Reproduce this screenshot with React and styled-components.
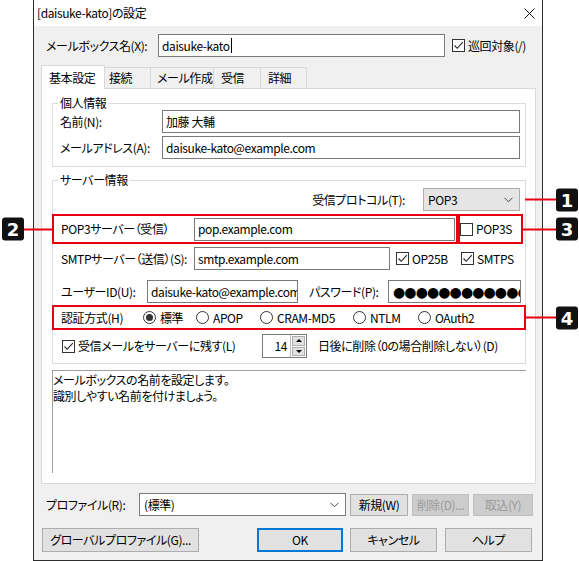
import React from 'react';
import styled, { createGlobalStyle } from 'styled-components';

const GlobalStyle = createGlobalStyle`
  html, body { margin: 0; padding: 0; background: #fff; }
  body {
    font-family: "Noto Sans CJK JP", sans-serif;
    font-size: 12px;
    line-height: 16px;
    letter-spacing: -0.4px;
    color: #000;
    font-feature-settings: "palt";
  }
  * { box-sizing: border-box; }
`;

const RED = '#e60012';

const Page = styled.div`
  width: 579px;
  height: 561px;
  padding-left: 33px;
  display: flex;
`;

const Window = styled.div`
  width: 510px;
  height: 561px;
  border: 1px solid #2d2d2d;
  border-top: none;
  display: flex;
  flex-direction: column;
`;

const TitleBar = styled.div`
  height: 26px;
  flex-shrink: 0;
  background: #fff;
  display: flex;
  align-items: center;
  justify-content: space-between;
  padding: 0 7px 0 3px;
`;

const Body = styled.div`
  flex: 1;
  background: #f0f0f0;
  padding-top: 8px;
  display: flex;
  flex-direction: column;
`;

const Row = styled.div`
  display: flex;
  align-items: center;
  height: ${p => p.$h || 23}px;
  margin-top: ${p => p.$mt || 0}px;
  padding-left: ${p => p.$pl || 0}px;
  padding-right: ${p => p.$pr || 0}px;
  justify-content: ${p => (p.$end ? 'flex-end' : 'flex-start')};
  position: relative;
  flex-shrink: 0;
`;

const Label = styled.span`
  width: ${p => (p.$w ? `${p.$w}px` : 'auto')};
  margin-left: ${p => p.$ml || 0}px;
  margin-right: ${p => p.$mr || 0}px;
  flex-shrink: 0;
  white-space: nowrap;
`;

const TextBox = styled.div`
  width: ${p => p.$w}px;
  height: ${p => p.$h || 23}px;
  margin-left: ${p => p.$ml || 0}px;
  border: 1px solid #7a7a7a;
  background: #fff;
  padding: 0 3px;
  display: flex;
  align-items: center;
  overflow: hidden;
  white-space: nowrap;
  flex-shrink: 0;
`;

const Caret = styled.span`
  width: 1px;
  height: 15px;
  background: #000;
  margin-left: 1px;
`;

const Dots = styled.span`
  font-family: "DejaVu Sans", sans-serif;
  font-size: 14px;
  letter-spacing: -0.9px;
  margin-left: 1px;
`;

const CheckWrap = styled.span`
  display: inline-flex;
  align-items: center;
  gap: 3px;
  width: ${p => (p.$w ? `${p.$w}px` : 'auto')};
  margin-left: ${p => p.$ml || 0}px;
  white-space: nowrap;
  flex-shrink: 0;
`;

const Box = styled.span`
  width: 13px;
  height: 13px;
  border: 1px solid #333;
  background: #fff;
  display: inline-flex;
  align-items: center;
  justify-content: center;
  flex-shrink: 0;
`;

const Check = ({ checked, children, w, ml }) => (
  <CheckWrap $w={w} $ml={ml}>
    <Box>
      {checked && (
        <svg width="11" height="11" viewBox="0 0 11 11">
          <path d="M1.5 5.5 L4.2 8.3 L9.8 2.2" fill="none" stroke="#222" strokeWidth="1.1" />
        </svg>
      )}
    </Box>
    <span>{children}</span>
  </CheckWrap>
);

const RadioItem = styled.span`
  display: inline-flex;
  align-items: center;
  gap: 4px;
  width: ${p => (p.$w ? `${p.$w}px` : 'auto')};
  flex-shrink: 0;
  white-space: nowrap;
`;

const RadioCircle = styled.span`
  width: 13px;
  height: 13px;
  border: 1px solid #333;
  border-radius: 50%;
  background: #fff;
  display: inline-flex;
  align-items: center;
  justify-content: center;
  flex-shrink: 0;
  &::after {
    content: '';
    width: 7px;
    height: 7px;
    border-radius: 50%;
    background: #333;
    display: ${p => (p.$on ? 'block' : 'none')};
  }
`;

const Radio = ({ on, w, children }) => (
  <RadioItem $w={w}>
    <RadioCircle $on={on} />
    <span>{children}</span>
  </RadioItem>
);

const TabStrip = styled.div`
  display: flex;
  align-items: flex-end;
  height: 23px;
  margin-top: 8px;
  padding-left: 7px;
  position: relative;
  z-index: 1;
  flex-shrink: 0;
`;

const Tab = styled.div`
  width: ${p => p.$w}px;
  height: ${p => (p.$active ? 24 : 21)}px;
  margin-bottom: ${p => (p.$active ? -1 : 0)}px;
  margin-left: ${p => (p.$first ? 0 : -1)}px;
  background: ${p => (p.$active ? '#fff' : '#f0f0f0')};
  border: 1px solid #d9d9d9;
  border-bottom: none;
  padding-left: ${p => p.$pl}px;
  display: flex;
  align-items: center;
  white-space: nowrap;
  position: relative;
  z-index: ${p => (p.$active ? 2 : 1)};
`;

const Panel = styled.div`
  margin: 0 6px 0 7px;
  height: 396px;
  flex-shrink: 0;
  background: #fff;
  border: 1px solid #d9d9d9;
  padding: 0 9px 0 10px;
  display: flex;
  flex-direction: column;
`;

const Group = styled.div`
  border: 1px solid #dcdcdc;
  margin-top: ${p => p.$mt}px;
  padding-bottom: ${p => p.$pb}px;
  display: flex;
  flex-direction: column;
`;

const GroupTitle = styled.div`
  align-self: flex-start;
  margin: -8px 0 0 5px;
  padding: 0 2px;
  height: 14px;
  line-height: 14px;
  background: #fff;
  white-space: nowrap;
`;

const RedBox = styled.div`
  border: 2px solid ${RED};
  height: ${p => p.$h}px;
  width: ${p => (p.$w ? `${p.$w}px` : 'auto')};
  flex: ${p => (p.$w ? '0 0 auto' : '1')};
  padding-left: ${p => p.$pl || 0}px;
  display: flex;
  align-items: center;
  position: relative;
`;

const RedRow = styled.div`
  display: flex;
  margin: ${p => p.$mt || 0}px -1px 0;
`;

const Callout = styled.div`
  position: absolute;
  top: 50%;
  transform: translateY(-50%);
  display: flex;
  align-items: center;
  ${p => (p.$left ? 'right: 100%; flex-direction: row-reverse;' : 'left: 100%;')}
`;

const Leader = styled.span`
  width: ${p => p.$len}px;
  height: 2px;
  background: ${RED};
`;

const Badge = styled.span`
  width: 22px;
  height: 23px;
  background: #111;
  color: #fff;
  border-radius: 3px;
  font-family: "DejaVu Sans", sans-serif;
  font-weight: bold;
  font-size: 18px;
  line-height: 23px;
  letter-spacing: 0;
  text-align: center;
  font-feature-settings: normal;
`;

const Select = styled.div`
  width: ${p => p.$w}px;
  height: 23px;
  border: 1px solid ${p => (p.$flat ? '#7a7a7a' : '#adadad')};
  background: ${p => (p.$flat ? '#fff' : '#e5e5e5')};
  display: flex;
  align-items: center;
  justify-content: space-between;
  padding: 0 6px 0 4px;
  flex-shrink: 0;
`;

const Chevron = () => (
  <svg width="9" height="6" viewBox="0 0 9 6">
    <path d="M0.5 0.8 L4.5 4.8 L8.5 0.8" fill="none" stroke="#444" strokeWidth="1" />
  </svg>
);

const SpinBox = styled.div`
  display: flex;
  width: 45px;
  height: 24px;
  border: 1px solid #7a7a7a;
  background: #fff;
  flex-shrink: 0;
`;

const SpinValue = styled.div`
  flex: 1;
  display: flex;
  align-items: center;
  justify-content: flex-end;
  padding-right: 3px;
  border-right: 1px solid #bcbcbc;
`;

const SpinButtons = styled.div`
  width: 15px;
  display: flex;
  flex-direction: column;
  padding: 1px;
  gap: 1px;
`;

const SpinButton = styled.div`
  flex: 1;
  background: #e1e1e1;
  border: 1px solid #adadad;
  display: flex;
  align-items: center;
  justify-content: center;
  &::after {
    content: '';
    border-left: 3px solid transparent;
    border-right: 3px solid transparent;
    ${p => (p.$down ? 'border-top: 3px solid #000;' : 'border-bottom: 3px solid #000;')}
  }
`;

const Description = styled.div`
  margin-top: 6px;
  height: 103px;
  border-top: 1px solid #a0a0a0;
  border-left: 1px solid #a0a0a0;
  padding-top: 1px;
  line-height: 16px;
  flex-shrink: 0;
`;

const Button = styled.div`
  width: ${p => p.$w}px;
  height: ${p => p.$h}px;
  margin-left: ${p => p.$ml || 0}px;
  background: ${p => (p.$disabled ? '#cccccc' : '#e1e1e1')};
  border: ${p => (p.$primary ? '2px solid #0078d7' : `1px solid ${p.$disabled ? '#bfbfbf' : '#adadad'}`)};
  color: ${p => (p.$disabled ? '#9a9a9a' : '#000')};
  display: flex;
  align-items: center;
  justify-content: center;
  white-space: nowrap;
  flex-shrink: 0;
`;

const tabs = [
  { name: '基本設定', w: 64, pl: 7, active: true },
  { name: '接続', w: 47, pl: 4 },
  { name: 'メール作成', w: 64, pl: 6 },
  { name: '受信', w: 48, pl: 7 },
  { name: '詳細', w: 47, pl: 7 },
];

const Num = ({ n, len, left }) => (
  <Callout $left={left}>
    <Leader $len={len} />
    <Badge>{n}</Badge>
  </Callout>
);

export default function App() {
  return (
    <>
      <GlobalStyle />
      <Page>
        <Window>
          <TitleBar>
            <span>[daisuke-kato]の設定</span>
            <svg width="11" height="11" viewBox="0 0 11 11">
              <path d="M0.5 0.5 L10.5 10.5 M10.5 0.5 L0.5 10.5" stroke="#111" strokeWidth="1" />
            </svg>
          </TitleBar>
          <Body>
            <Row $pl={12}>
              <Label $w={112}>メールボックス名(X):</Label>
              <TextBox $w={287}>daisuke-kato<Caret /></TextBox>
              <Check checked ml={7}>巡回対象(/)</Check>
            </Row>

            <TabStrip>
              {tabs.map((t, i) => (
                <Tab key={t.name} $w={t.w} $pl={t.pl} $active={t.active} $first={i === 0}>
                  {t.name}
                </Tab>
              ))}
            </TabStrip>

            <Panel>
              <Group $mt={14} $pb={7}>
                <GroupTitle>個人情報</GroupTitle>
                <Row $pl={7}>
                  <Label $w={102}>名前(N):</Label>
                  <TextBox $w={358}>加藤 大輔</TextBox>
                </Row>
                <Row $pl={7} $mt={3}>
                  <Label $w={102}>メールアドレス(A):</Label>
                  <TextBox $w={358}>daisuke-kato@example.com</TextBox>
                </Row>
              </Group>

              <Group $mt={13} $pb={5}>
                <GroupTitle>サーバー情報</GroupTitle>
                <Row $mt={1} $end $pr={5}>
                  <Label $mr={18}>受信プロトコル(T):</Label>
                  <Select $w={97}>
                    <span>POP3</span>
                    <Chevron />
                  </Select>
                  <Num n="1" len={31} />
                </Row>

                <RedRow $mt={3}>
                  <RedBox $w={406} $h={30} $pl={7}>
                    <Label $w={133}>POP3サーバー（受信）</Label>
                    <TextBox $w={261}>pop.example.com</TextBox>
                    <Num n="2" len={30} left />
                  </RedBox>
                  <RedBox $w={65} $h={30}>
                    <Check>POP3S</Check>
                    <Num n="3" len={35} />
                  </RedBox>
                </RedRow>

                <Row $mt={3} $pl={8}>
                  <Label $w={133}>SMTPサーバー（送信）(S):</Label>
                  <TextBox $w={196}>smtp.example.com</TextBox>
                  <Check checked w={65} ml={6}>OP25B</Check>
                  <Check checked>SMTPS</Check>
                </Row>

                <Row $mt={10} $pl={8}>
                  <Label $w={86}>ユーザーID(U):</Label>
                  <TextBox $w={151}>daisuke-kato@example.com</TextBox>
                  <Label $w={79} $ml={11}>パスワード(P):</Label>
                  <TextBox $w={133}><Dots>●●●●●●●●●●●●</Dots></TextBox>
                </Row>

                <RedRow $mt={2}>
                  <RedBox $h={25} $pl={7}>
                    <Label $w={82}>認証方式(H)</Label>
                    <Radio on w={53}>標準</Radio>
                    <Radio w={64}>APOP</Radio>
                    <Radio w={93}>CRAM-MD5</Radio>
                    <Radio w={65}>NTLM</Radio>
                    <Radio>OAuth2</Radio>
                    <Num n="4" len={32} />
                  </RedBox>
                </RedRow>

                <Row $mt={4} $h={24} $pl={9}>
                  <Check checked w={200}>受信メールをサーバーに残す(L)</Check>
                  <SpinBox>
                    <SpinValue>14</SpinValue>
                    <SpinButtons>
                      <SpinButton />
                      <SpinButton $down />
                    </SpinButtons>
                  </SpinBox>
                  <Label $ml={11}>日後に削除（0の場合削除しない）(D)</Label>
                </Row>
              </Group>

              <Description>
                メールボックスの名前を設定します。
                <br />
                識別しやすい名前を付けましょう。
              </Description>
            </Panel>

            <Row $mt={9} $pl={12}>
              <Label $w={93}>プロファイル(R):</Label>
              <Select $w={207} $flat>
                <span>(標準)</span>
                <Chevron />
              </Select>
              <Button $w={58} $h={22} $ml={4}>新規(W)</Button>
              <Button $w={57} $h={22} $ml={4} $disabled>削除(D)...</Button>
              <Button $w={60} $h={22} $ml={4} $disabled>取込(Y)</Button>
            </Row>

            <Row $mt={12} $h={24} $pl={8}>
              <Button $w={157} $h={24}>グローバルプロファイル(G)...</Button>
              <Button $w={86} $h={24} $ml={58} $primary>OK</Button>
              <Button $w={87} $h={24} $ml={7}>キャンセル</Button>
              <Button $w={87} $h={24} $ml={8}>ヘルプ</Button>
            </Row>
          </Body>
        </Window>
      </Page>
    </>
  );
}
